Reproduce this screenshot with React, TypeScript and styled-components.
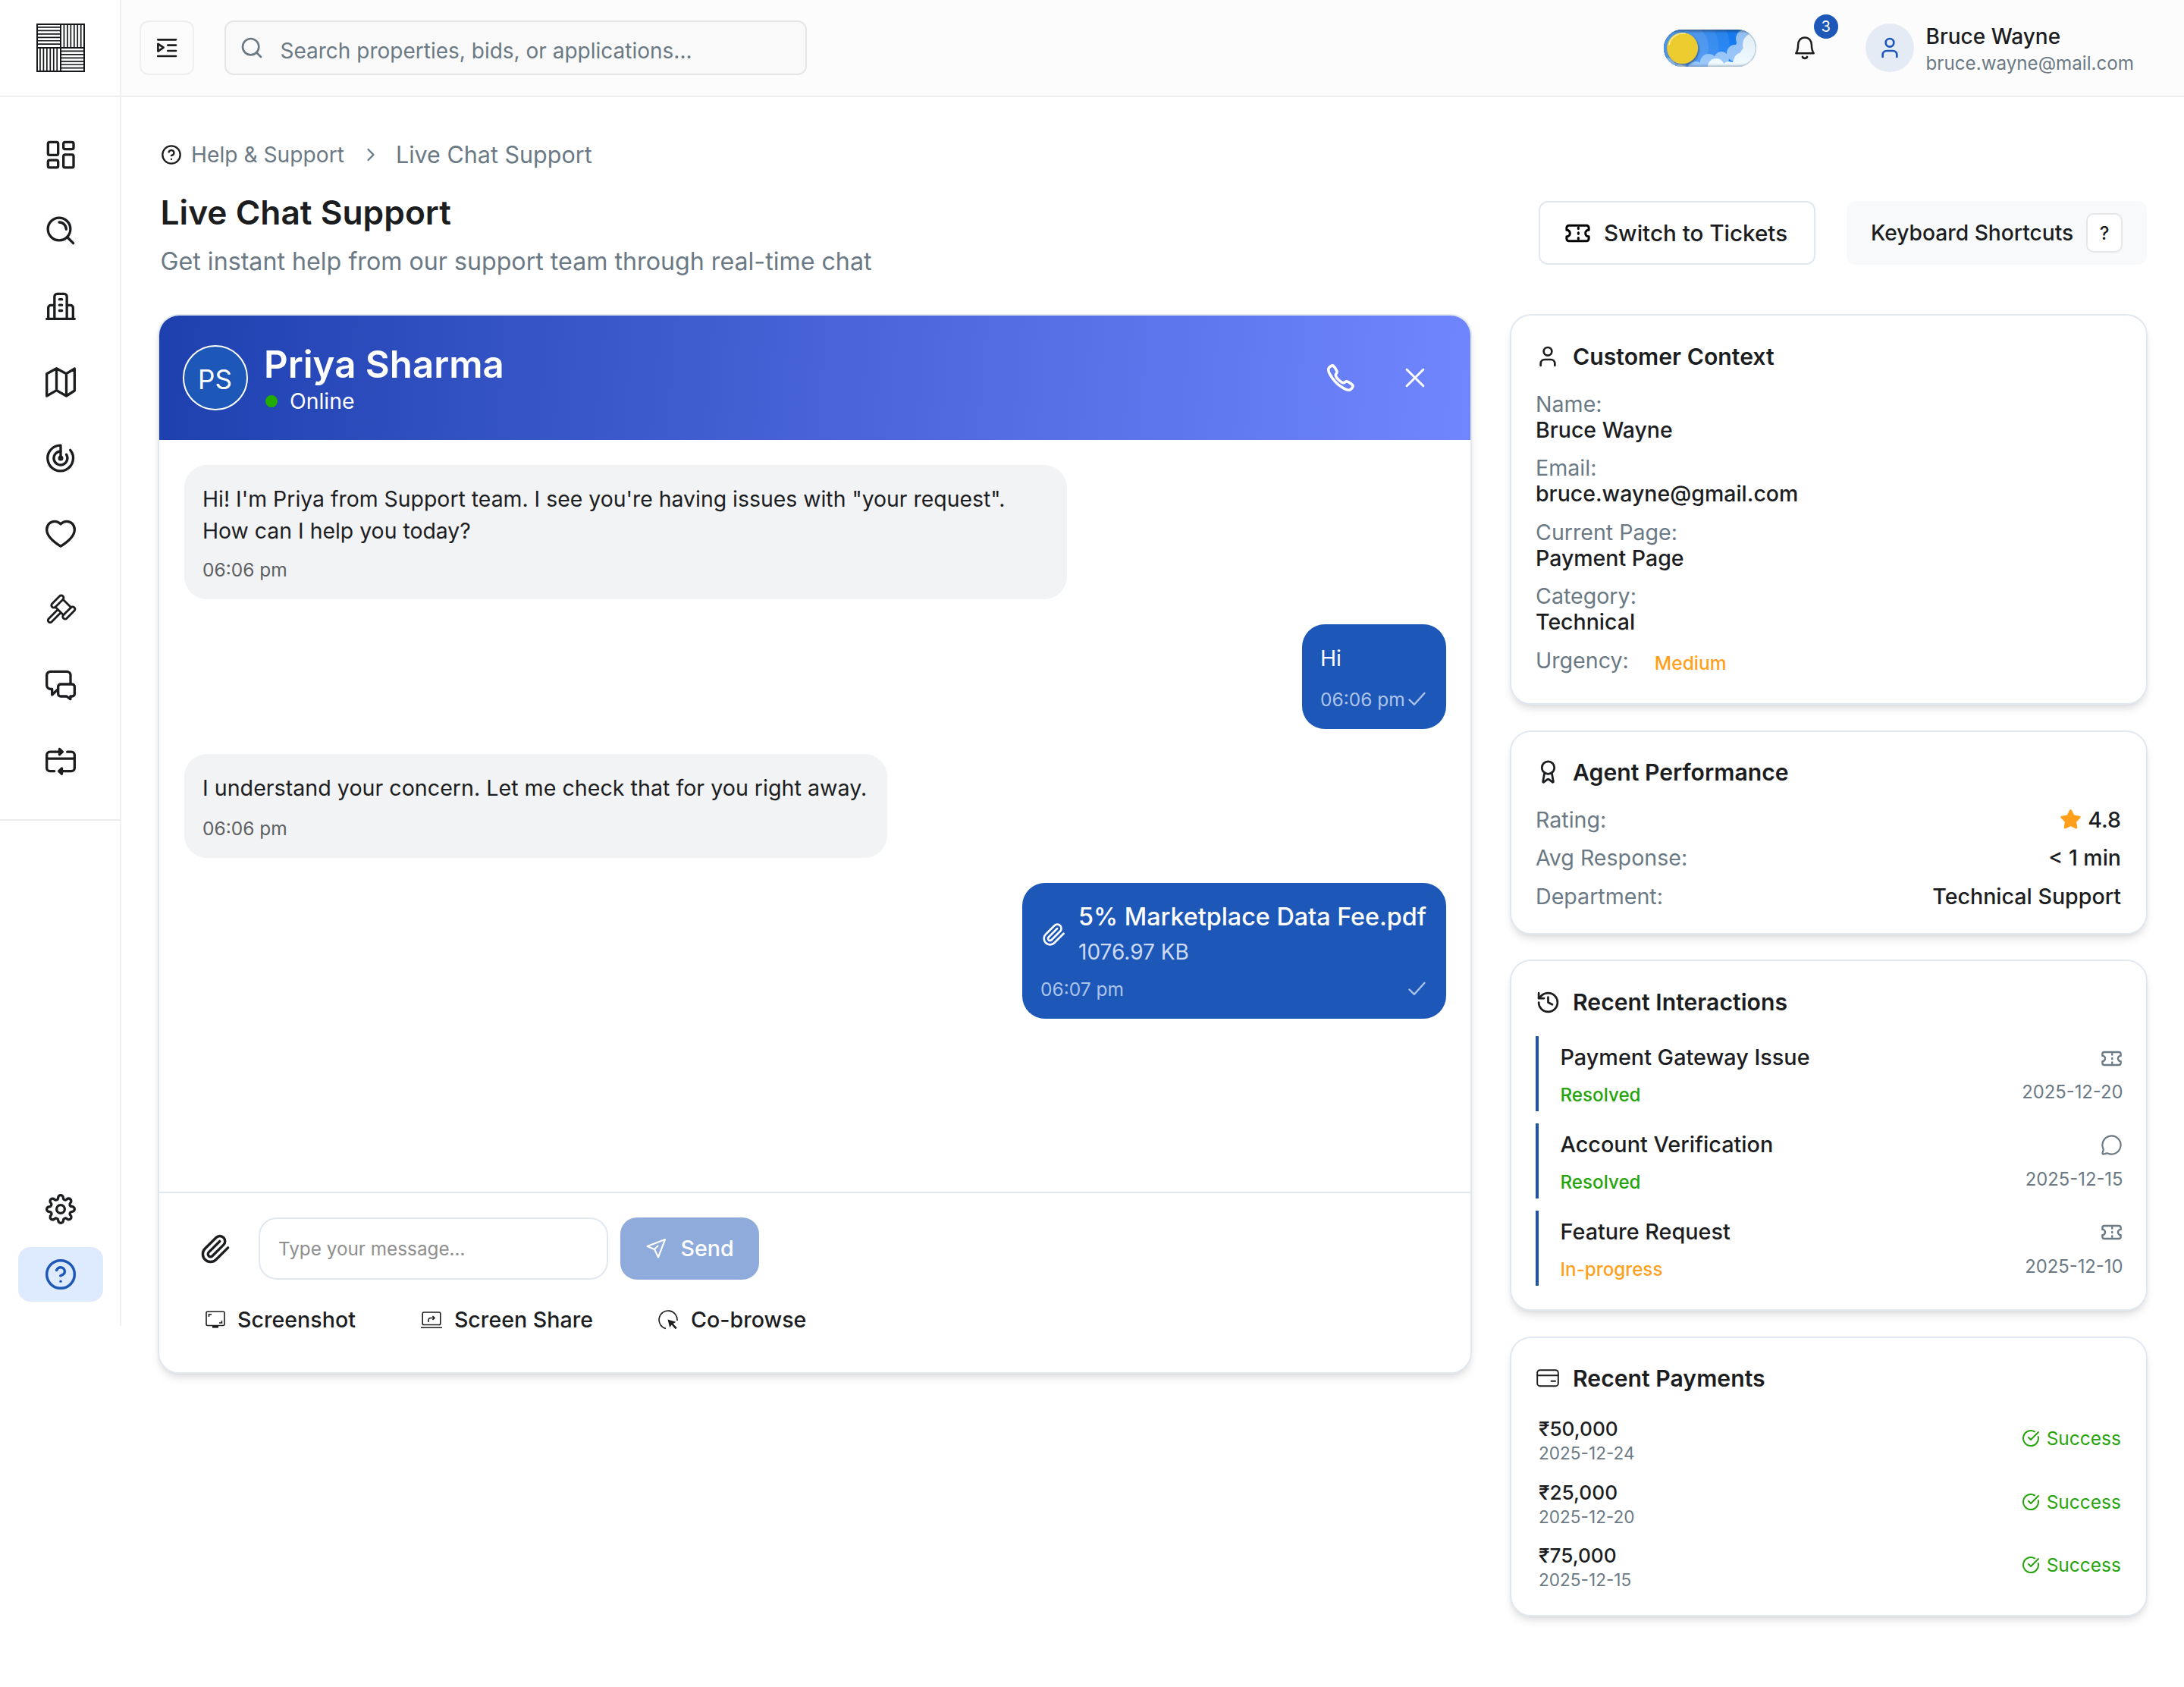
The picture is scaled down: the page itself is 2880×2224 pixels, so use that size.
import React from "react";
import styled, { createGlobalStyle, css } from "styled-components";
import {
  User,
  Award,
  History,
  MessageCircle,
  CircleCheckBig,
  Star,
  CircleHelp,
  Search,
  ChevronRight,
} from "lucide-react";
import { IoCallOutline } from "react-icons/io5";

const ink = "#1c1d1f";
const muted = "#6b7984";
const primary = "#1d58b8";
const green = "#25a40b";
const amber = "#ff9f1c";
const line = "#e2e8f0";

const GlobalStyle = createGlobalStyle`
  * { box-sizing: border-box; }
  body { margin: 0; background: #fff; }
  svg { display: block; flex: none; }
`;

type TypeProps = { $size: number; $lh: number; $weight?: number; $color?: string };
const type = css<TypeProps>`
  font-size: ${(p) => p.$size}px;
  line-height: ${(p) => p.$lh}px;
  font-weight: ${(p) => p.$weight ?? 400};
  color: ${(p) => p.$color ?? ink};
  white-space: nowrap;
`;

/* ---------- shell ---------- */

const Page = styled.div`
  display: flex;
  align-items: flex-start;
  width: 2880px;
  height: 2224px;
  overflow: hidden;
  font-family: Inter, "Liberation Sans", sans-serif;
  color: ${ink};
  background: #fff;
`;

const Sidebar = styled.aside`
  display: flex;
  flex-direction: column;
  width: 160px;
  height: 1748px;
  border-right: 2px solid #f0f0f1;
`;

const LogoCell = styled.div`
  display: flex;
  align-items: center;
  justify-content: center;
  height: 128px;
  padding-left: 2px;
  border-bottom: 2px solid #efeff0;
`;

const NavGroup = styled.nav<{ $main?: boolean }>`
  display: flex;
  flex-direction: column;
  align-items: center;
  padding-left: 2px;
  ${(p) =>
    p.$main
      ? css`
          gap: 28px;
          padding-top: 40px;
          height: 954px;
          border-bottom: 2px solid #e9ebec;
        `
      : css`
          margin-top: auto;
          gap: 14px;
          padding-bottom: 32px;
        `}
`;

const NavItem = styled.a<{ $active?: boolean }>`
  display: flex;
  align-items: center;
  justify-content: center;
  width: 112px;
  height: 72px;
  border-radius: 16px;
  color: ${(p) => (p.$active ? primary : ink)};
  background: ${(p) => (p.$active ? "#deeafe" : "transparent")};
`;

const Column = styled.div`
  flex: 1;
  min-width: 0;
`;

const TopBar = styled.header`
  display: flex;
  align-items: center;
  height: 128px;
  padding: 0 66px 0 24px;
  border-bottom: 2px solid #efeff0;
  background: #fcfcfc;
`;

const MenuButton = styled.button`
  display: flex;
  align-items: center;
  justify-content: center;
  width: 72px;
  height: 72px;
  padding: 0;
  border: 2px solid #efefef;
  border-radius: 12px;
  background: #fcfcfc;
  color: ${ink};
`;

const SearchBox = styled.div`
  display: flex;
  align-items: center;
  gap: 21.5px;
  width: 768px;
  height: 72px;
  margin-left: 40px;
  padding: 0 18px;
  border: 2px solid #e3e5e6;
  border-radius: 12px;
  background: #f9f9f9;
  color: ${muted};
`;

const SearchText = styled.span<TypeProps>`
  ${type}
  padding-top: 7px;
`;

const TopActions = styled.div`
  display: flex;
  align-items: center;
  margin-left: auto;
`;

const BellButton = styled.div`
  position: relative;
  margin: 0 64px 0 48px;
`;

const Badge = styled.span`
  position: absolute;
  left: 28px;
  top: -28px;
  display: flex;
  align-items: center;
  justify-content: center;
  width: 32px;
  height: 32px;
  border-radius: 50%;
  background: ${primary};
  color: #fff;
  font-size: 20px;
  line-height: 32px;
`;

const UserAvatar = styled.div`
  display: flex;
  align-items: center;
  justify-content: center;
  width: 64px;
  height: 64px;
  border-radius: 50%;
  background: #e5ebf5;
  color: ${primary};
`;

const UserText = styled.div`
  display: flex;
  flex-direction: column;
  gap: 1px;
  margin-left: 16px;
  padding-top: 4px;
`;

const Text = styled.span<TypeProps>`
  ${type}
`;

/* ---------- page heading ---------- */

const Main = styled.main`
  padding: 58px 48px 0;
`;

const Breadcrumb = styled.div`
  display: flex;
  align-items: center;
  height: 36px;
  padding-left: 4px;
  color: ${ink};
`;

const Crumb = styled.span<TypeProps & { $gap: number }>`
  ${type}
  margin-left: ${(p) => p.$gap}px;
`;

const PageHead = styled.div`
  display: flex;
  justify-content: space-between;
  margin-top: 30px;
  padding: 0 1px 0 3.5px;
`;

const HeadText = styled.div`
  display: flex;
  flex-direction: column;
  gap: 17px;
`;

const HeadActions = styled.div`
  display: flex;
  gap: 41px;
  height: 97px;
  padding-top: 13px;
`;

const TicketsButton = styled.button`
  display: flex;
  align-items: center;
  gap: 17px;
  height: 84px;
  width: 365px;
  padding: 0 0 0 32px;
  border: 2px solid ${line};
  border-radius: 12px;
  background: #fff;
  font-family: inherit;
`;

const Shortcuts = styled.div`
  display: flex;
  align-items: center;
  justify-content: space-between;
  width: 396px;
  height: 84px;
  padding: 0 32px;
  border-radius: 12px;
  background: #f8f9fb;
`;

const Key = styled.kbd`
  display: flex;
  align-items: center;
  justify-content: center;
  width: 48px;
  height: 52px;
  border: 2px solid #e6e7e9;
  border-radius: 10px;
  background: #fff;
  font-family: inherit;
  font-size: 24px;
  font-weight: 500;
`;

const Columns = styled.div`
  display: grid;
  grid-template-columns: 1733px 841px;
  justify-content: space-between;
  align-items: start;
  margin-top: 49px;
`;

/* ---------- chat ---------- */

const cardFrame = css`
  border: 2px solid ${line};
  border-radius: 28px;
  background: #fff;
  box-shadow: 0 8px 12px -2px rgba(16, 24, 40, 0.1), 0 4px 8px -4px rgba(16, 24, 40, 0.1);
`;

const ChatCard = styled.section`
  ${cardFrame}
  display: flex;
  flex-direction: column;
  height: 1397px;
  overflow: hidden;
`;

const ChatHeader = styled.div`
  display: flex;
  align-items: center;
  height: 164px;
  padding: 0 53px 0 31px;
  background: linear-gradient(95deg, #1e40af 0%, #7086ff 100%);
  color: #fff;
`;

const AgentAvatar = styled.div`
  display: flex;
  align-items: center;
  justify-content: center;
  width: 86px;
  height: 86px;
  border: 2px solid #fff;
  border-radius: 50%;
  background: ${primary};
  font-size: 35px;
  line-height: 40px;
  padding: 3px 1px 0 0;
`;

const AgentText = styled.div`
  display: flex;
  flex-direction: column;
  gap: 3px;
  margin-left: 21px;
`;

const Presence = styled.div`
  display: flex;
  align-items: center;
  gap: 16px;
  padding-left: 2px;

  &::before {
    content: "";
    width: 16px;
    height: 16px;
    border-radius: 50%;
    background: #22ab00;
  }
`;

const CallActions = styled.div`
  display: flex;
  gap: 58px;
  margin-left: auto;

  .call path {
    stroke-width: 46px;
  }
`;

const Messages = styled.div`
  display: flex;
  flex: 1;
  flex-direction: column;
  align-items: flex-start;
  gap: 33px;
  padding: 33px 32px 0 33px;
`;

const Bubble = styled.div<{ $own?: boolean; $width: number; $height: number }>`
  display: flex;
  flex-direction: column;
  justify-content: space-between;
  align-self: ${(p) => (p.$own ? "flex-end" : "flex-start")};
  width: ${(p) => p.$width}px;
  height: ${(p) => p.$height}px;
  padding: 24px 24px 23.5px;
  border-radius: 30px;
  color: ${(p) => (p.$own ? "#fff" : ink)};
  background: ${(p) => (p.$own ? primary : "#f2f3f5")};
`;

const BubbleText = styled.p<{ $size?: number }>`
  margin: 0;
  font-size: ${(p) => p.$size ?? 28.4}px;
  line-height: 42px;
  white-space: nowrap;
`;

const BubbleMeta = styled.div<{ $own?: boolean }>`
  display: flex;
  align-items: center;
  justify-content: space-between;
  padding-right: 3.5px;
  font-size: 24.5px;
  line-height: 32px;
  white-space: nowrap;
  color: ${(p) => (p.$own ? "#adc4e8" : "#5d6063")};
`;

const Attachment = styled.div`
  display: flex;
  align-items: center;
  gap: 16.5px;
  padding-left: 1.5px;
`;

const AttachmentText = styled.div`
  display: flex;
  flex-direction: column;
  gap: 5px;
`;

const Composer = styled.div`
  height: 238px;
  padding: 32px 0 0 54px;
  border-top: 2px solid ${line};
`;

const ComposerRow = styled.div`
  display: flex;
  align-items: center;
`;

const MessageInput = styled.div`
  display: flex;
  align-items: center;
  width: 461px;
  height: 82px;
  margin: 0 16px 0 36px;
  padding-left: 24px;
  border: 2px solid ${line};
  border-radius: 24px;
  background: #fff;
`;

const SendButton = styled.button`
  display: flex;
  align-items: center;
  gap: 18.5px;
  width: 183px;
  height: 82px;
  padding: 0 0 1px 34px;
  border: 0;
  border-radius: 22px;
  background: #8eabdb;
  font-family: inherit;
`;

const Tools = styled.div`
  display: flex;
  align-items: center;
  gap: 86px;
  margin-top: 35px;
  padding-left: 7px;
`;

const Tool = styled.div`
  display: flex;
  align-items: center;
  gap: 16px;
`;

/* ---------- side cards ---------- */

const SideColumn = styled.div`
  display: flex;
  flex-direction: column;
  gap: 33.6px;
`;

const SideCard = styled.section<{ $height: number; $top?: number }>`
  ${cardFrame}
  display: flex;
  flex-direction: column;
  height: ${(p) => p.$height}px;
  padding: ${(p) => p.$top ?? 34}px 33px 0 32px;
`;

const CardHead = styled.h2<{ $gap: number }>`
  display: flex;
  align-items: center;
  gap: 17px;
  height: 40px;
  margin: 0 0 ${(p) => p.$gap}px;
  font-size: 30.2px;
  line-height: 40px;
  font-weight: 600;
`;

const HeadIcon = styled.span`
  display: flex;
  justify-content: center;
  width: 32px;
`;

const Rows = styled.div<{ $gap: number }>`
  display: flex;
  flex-direction: column;
  gap: ${(p) => p.$gap}px;
`;

const Field = styled.div`
  display: flex;
  flex-direction: column;
`;

const InlineField = styled.div`
  display: flex;
  align-items: flex-end;
  gap: 34px;
`;

const UrgencyTag = styled.span<TypeProps>`
  ${type}
  margin-bottom: -3px;
`;

const StatRow = styled.div`
  display: flex;
  align-items: center;
  justify-content: space-between;
`;

const StatValue = styled.div`
  display: flex;
  align-items: center;
  gap: 8px;
`;

const Interaction = styled.div`
  display: flex;
  justify-content: space-between;
  height: 99px;
  margin-right: -2.5px;
  padding: 8px 0 0 28.5px;
  border-left: 4px solid #1f55a8;
`;

const InteractionText = styled.div<{ $end?: boolean }>`
  display: flex;
  flex-direction: column;
  align-items: ${(p) => (p.$end ? "flex-end" : "flex-start")};
  gap: ${(p) => (p.$end ? 9 : 15)}px;
  color: ${muted};
`;

const IconLine = styled.span`
  display: flex;
  align-items: center;
  height: 42px;
  padding-right: 1px;
`;

const Payment = styled.div`
  display: flex;
  justify-content: space-between;
  height: 64px;
  padding-left: 4px;
`;

const PaymentText = styled.div`
  display: flex;
  flex-direction: column;
  gap: 1px;
`;

const PaymentStatus = styled.div`
  display: flex;
  align-items: center;
  gap: 9px;
  height: 58px;
  color: ${green};
`;

/* ---------- icons ---------- */

type IconProps = { size?: number; sw?: number; children?: React.ReactNode };
const Glyph = ({ size = 40, sw = 2, children }: IconProps) => (
  <svg
    width={size}
    height={size}
    viewBox="0 0 24 24"
    fill="none"
    stroke="currentColor"
    strokeWidth={sw}
    strokeLinecap="round"
    strokeLinejoin="round"
    overflow="visible"
  >
    {children}
  </svg>
);

const steps = [4.45, 8.9, 13.35, 17.8, 22.25, 26.7];
const Logo = () => (
  <svg width="64" height="64" viewBox="0 0 64 64" fill="none" stroke="#17181a" strokeWidth="1.7">
    <rect x="1" y="1" width="62" height="62" strokeWidth="2" />
    <path d="M32 0V64M0 32H64" strokeWidth="2" />
    {steps.map((s) => (
      <path key={s} d={`M0 ${s + 0.5}H32M${32 + s} 0V32M${s + 0.5} 32V64M32 ${32 + s}H64`} />
    ))}
  </svg>
);

const GridIcon = () => (
  <Glyph>
    <rect x="2" y="2" width="8" height="10.2" rx="1.3" />
    <rect x="14.2" y="2" width="8" height="5.6" rx="1.3" />
    <rect x="2" y="16.3" width="8" height="5.8" rx="1.3" />
    <rect x="14.2" y="11.9" width="8" height="10.2" rx="1.3" />
  </Glyph>
);

const ExploreIcon = () => (
  <Glyph>
    <circle cx="10.8" cy="10.8" r="8.9" />
    <path d="M17.4 17.4L22 22M10.8 5.4a5.6 5.6 0 0 1 5.6 5.6" />
  </Glyph>
);

const BuildingIcon = () => (
  <Glyph>
    <path d="M7.1 21.8V4.2A2.2 2.2 0 0 1 9.3 2h5.4a2.2 2.2 0 0 1 2.2 2.2v17.6" />
    <path d="M7 11H4.2a2 2 0 0 0-2 2v8.8M17 11h2.8a2 2 0 0 1 2 2v8.8M1 21.8h22" />
    <path d="M11 6.4h2M11 10.9h2M11 15.3h2" />
  </Glyph>
);

const MapIcon = () => (
  <Glyph>
    <path d="M1 5.2v17.6l7.7-4.4 7.8 4.4 6.5-4.2V1.2l-6.5 4-7.8-4.2zM8.7 1v17.4M16.5 5.2v17.6" />
  </Glyph>
);

const TargetIcon = () => (
  <Glyph>
    <path d="M12 12V1.9A10.1 10.1 0 1 0 19.6 5.6" />
    <path d="M12 6.6a5.4 5.4 0 1 0 4.5 2.5" />
    <circle cx="12" cy="12" r="1.1" />
  </Glyph>
);

const HeartIcon = () => (
  <Glyph>
    <path d="M12 4.1C10.7 2.8 9.1 2 7.2 2 3.7 2 1 4.8 1 8.5c0 5.6 5.6 9.8 11 13.2 5.4-3.4 11-7.6 11-13.2C23 4.8 20.3 2 16.8 2c-1.9 0-3.5.8-4.8 2.1Z" />
  </Glyph>
);

const GavelIcon = () => (
  <Glyph sw={1.7}>
    <g transform="translate(14 9.9) rotate(-45)">
      <rect x="-6" y="-8.2" width="12" height="3.7" rx="1.7" />
      <rect x="-6" y="4.5" width="12" height="3.7" rx="1.7" />
      <path d="M-4.3 -4.5V4.5M4.3 -4.5V4.5M-4.3 -1.7H-14.6a1.7 1.7 0 0 0 0 3.4H-4.3" />
    </g>
  </Glyph>
);

const ChatsIcon = () => (
  <Glyph>
    <path d="M19.8 10V3.8a3 3 0 0 0-3-3H4a3 3 0 0 0-3 3v7.8a3 3 0 0 0 3 3h1.2v4.6l4.4-4.2" />
    <path d="M12 10.8h9a2 2 0 0 1 2 2v5.6a2 2 0 0 1-2 2h-1.3v2.2l-3-2.2H12a2 2 0 0 1-2-2v-5.6a2 2 0 0 1 2-2Z" />
  </Glyph>
);

const CardSwapIcon = () => (
  <Glyph>
    <path d="M7 19.6H3.5A2.5 2.5 0 0 1 1 17.1V6.8a2.5 2.5 0 0 1 2.5-2.5H13M17.2 4.3h3.3A2.5 2.5 0 0 1 23 6.8v10.3a2.5 2.5 0 0 1-2.5 2.5H11M1 9.7h22" />
    <path d="M11.1 2.1v4.4l2.3-2.2zM12.9 17.4v4.4l-2.3-2.2z" fill="currentColor" />
  </Glyph>
);

const GearIcon = () => (
  <Glyph>
    <circle cx="12" cy="12" r="3.2" />
    <path d="M19.4 15a1.65 1.65 0 0 0 .33 1.82l.06.06a2 2 0 0 1 0 2.83 2 2 0 0 1-2.83 0l-.06-.06a1.65 1.65 0 0 0-1.82-.33 1.65 1.65 0 0 0-1 1.51V21a2 2 0 0 1-2 2 2 2 0 0 1-2-2v-.09A1.65 1.65 0 0 0 9 19.4a1.65 1.65 0 0 0-1.82.33l-.06.06a2 2 0 0 1-2.83 0 2 2 0 0 1 0-2.83l.06-.06a1.65 1.65 0 0 0 .33-1.82 1.65 1.65 0 0 0-1.51-1H3a2 2 0 0 1-2-2 2 2 0 0 1 2-2h.09A1.65 1.65 0 0 0 4.6 9a1.65 1.65 0 0 0-.33-1.82l-.06-.06a2 2 0 0 1 0-2.83 2 2 0 0 1 2.83 0l.06.06a1.65 1.65 0 0 0 1.82.33H9a1.65 1.65 0 0 0 1-1.51V3a2 2 0 0 1 2-2 2 2 0 0 1 2 2v.09a1.65 1.65 0 0 0 1 1.51 1.65 1.65 0 0 0 1.82-.33l.06-.06a2 2 0 0 1 2.83 0 2 2 0 0 1 0 2.83l-.06.06a1.65 1.65 0 0 0-.33 1.82V9a1.65 1.65 0 0 0 1.51 1H21a2 2 0 0 1 2 2 2 2 0 0 1-2 2h-.09a1.65 1.65 0 0 0-1.51 1z" />
  </Glyph>
);

const MenuIcon = () => (
  <svg width="32" height="32" viewBox="0 0 32 32" fill="none" stroke="currentColor" strokeWidth="2.7" strokeLinecap="round" strokeLinejoin="round">
    <path d="M4.2 5.3H28M17.3 12.6H28M17.3 20H28M4.2 27H28M4.4 10.8v9.8l7.2-4.9z" />
  </svg>
);

const BellIcon = () => (
  <svg width="32" height="32" viewBox="0 0 32 32" fill="none" stroke={ink} strokeWidth="2.5" strokeLinecap="round" strokeLinejoin="round">
    <path d="M4.3 23.3C6.3 20.3 7.1 17 7.1 12.2 7.1 6.4 10.9 2.4 16 2.4s8.9 4 8.9 9.8c0 4.8.8 8.1 2.8 11.1Z" />
    <path d="M13 28c.5 1.3 1.7 1.8 3 1.8s2.5-.5 3-1.8" strokeWidth="2.8" />
  </svg>
);

const TicketIcon = ({ size, sw }: IconProps) => (
  <Glyph size={size} sw={sw}>
    <path d="M2 9a3 3 0 0 1 0 6v2a2 2 0 0 0 2 2h16a2 2 0 0 0 2-2v-2a3 3 0 0 1 0-6V7a2 2 0 0 0-2-2H4a2 2 0 0 0-2 2Z" />
    <path d="M12.6 6.8v1M12.6 11.5v1M12.6 16.2v1" />
  </Glyph>
);

const ClipIcon = ({ size, sw }: IconProps) => (
  <Glyph size={size} sw={sw}>
    <path d="m21.44 11.05-9.19 9.19a6 6 0 0 1-8.49-8.49l8.57-8.57A4 4 0 1 1 18 8.84l-8.59 8.57a2 2 0 0 1-2.83-2.83l8.49-8.48" />
  </Glyph>
);

const CloseIcon = () => (
  <svg width="40" height="40" viewBox="0 0 40 40" fill="none" stroke="#fff" strokeWidth="3" strokeLinecap="round">
    <path d="M9.2 9.2L30.8 30.8M30.8 9.2L9.2 30.8" />
  </svg>
);

const TickIcon = () => (
  <svg width="23" height="19" viewBox="0 0 23 19" fill="none" stroke="currentColor" strokeWidth="2.3" strokeLinecap="round" strokeLinejoin="round">
    <path d="M1.5 10.5L8 16.8L21.5 1.8" />
  </svg>
);

const SendIcon = () => (
  <svg width="27" height="27" viewBox="0 0 27 27" fill="none" stroke="#fff" strokeWidth="2.1" strokeLinejoin="round" strokeLinecap="round">
    <path d="M25 2L1.5 11l9.5 4L16 25.5ZM11 15l4.5-4.5" />
  </svg>
);

const ScreenshotIcon = () => (
  <svg width="26" height="24" viewBox="0 0 26 24" fill="none" stroke={ink} strokeWidth="1.6">
    <rect x="1" y="1" width="24" height="18.5" rx="2" />
    <path d="M4.5 8V4.7H8M21.5 13v3H18" />
    <path d="M9 20h8v2.600H9z" fill={ink} stroke="none" />
  </svg>
);

const ScreenShareIcon = () => (
  <svg width="28" height="23" viewBox="0 0 28 23" fill="none" stroke={ink} strokeWidth="1.6">
    <rect x="2.2" y="1" width="23.6" height="16.5" rx="1.8" />
    <path d="M0 21.300H28M10 14V11.5a3 3 0 0 1 3-3H17.500M15.500 6l2.500 2.500-2.500 2.500" />
  </svg>
);

const CoBrowseIcon = () => (
  <svg width="27" height="27" viewBox="0 0 27 27" fill="none" stroke={ink} strokeWidth="1.6">
    <path d="M10 24.6A12 12 0 1 1 25 14" />
    <path d="M12.5 12.5l2.700 10.500 2.500-3.400 5 5.600 2-1.800-5-5.500 3.700-2.200z" fill={ink} stroke="none" />
  </svg>
);

const WalletIcon = () => (
  <svg width="30" height="24" viewBox="0 0 30 24" fill="none" stroke={ink} strokeWidth="1.900" strokeLinecap="round">
    <rect x="1.200" y="1.200" width="27.600" height="21" rx="3.500" />
    <path d="M1.200 8.300H28.800M19.500 15.700H25" />
  </svg>
);

const discs = (list: number[][], fill: string) =>
  list.map(([cx, cy, r]) => <circle key={`${cx}-${cy}`} cx={cx} cy={cy} r={r} fill={fill} />);

const ThemeToggle = () => (
  <svg width="122" height="49" viewBox="0 0 122 49">
    <defs>
      <clipPath id="pill">
        <rect width="122" height="49" rx="24.500" />
      </clipPath>
      <linearGradient id="shade" x1="0" y1="0" x2="0" y2="1">
        <stop offset="0" stopColor="#0c2340" stopOpacity="0.500" />
        <stop offset="0.100" stopColor="#0c2340" stopOpacity="0.060" />
        <stop offset="0.900" stopColor="#0c2340" stopOpacity="0" />
        <stop offset="1" stopColor="#0c2340" stopOpacity="0.160" />
      </linearGradient>
      <filter id="soft" x="-20%" y="-20%" width="140%" height="150%">
        <feDropShadow dx="1" dy="2" stdDeviation="1.500" floodColor="#0b2b55" floodOpacity="0.600" />
      </filter>
    </defs>
    <g clipPath="url(#pill)">
      <rect width="122" height="49" fill="#177ff8" />
      <circle cx="25" cy="24" r="62" fill="#2b8af7" />
      <circle cx="25" cy="24" r="47.500" fill="#3c92f6" />
      <circle cx="25" cy="24" r="34" fill="#529df6" />
      {discs([[5, 47, 10], [20, 50, 10], [42, 53, 11], [59, 43, 11], [76, 39, 10], [94, 31, 11], [104, 22, 9], [107, 12, 12], [114, 2, 10]], "#9bc8fb")}
      {discs([[22, 55, 9], [69, 49, 11], [86, 52, 10], [104, 42, 12], [120, 20, 16], [116, 36, 16], [100, 50, 12]], "#effaff")}
      <rect width="122" height="49" fill="url(#shade)" />
      <rect x="0.500" y="0.500" width="121" height="48" rx="24" fill="none" stroke="#5b7288" strokeOpacity="0.250" strokeWidth="2" />
    </g>
    <circle cx="24.600" cy="24.500" r="20.500" fill="#ebcb2d" filter="url(#soft)" />
    <path d="M7 20A18.500 18.500 0 0 1 28 5.300" stroke="#fbee9c" strokeWidth="1.500" fill="none" strokeLinecap="round" />
  </svg>
);

/* ---------- data ---------- */

const mainNav = [GridIcon, ExploreIcon, BuildingIcon, MapIcon, TargetIcon, HeartIcon, GavelIcon, ChatsIcon, CardSwapIcon];

const context = [
  ["Name:", "Bruce Wayne"],
  ["Email:", "bruce.wayne@gmail.com"],
  ["Current Page:", "Payment Page"],
  ["Category:", "Technical"],
];

const interactions = [
  { title: "Payment Gateway Issue", status: "Resolved", date: "2025-12-20", kind: "ticket" },
  { title: "Account Verification", status: "Resolved", date: "2025-12-15", kind: "chat" },
  { title: "Feature Request", status: "In-progress", date: "2025-12-10", kind: "ticket" },
];

const payments = [
  ["₹50,000", "2025-12-24"],
  ["₹25,000", "2025-12-20"],
  ["₹75,000", "2025-12-15"],
];

/* ---------- sections ---------- */

const Chat = () => (
  <ChatCard>
    <ChatHeader>
      <AgentAvatar>PS</AgentAvatar>
      <AgentText>
        <Text $size={49.2} $lh={58} $weight={600} $color="#fff">Priya Sharma</Text>
        <Presence>
          <Text $size={28.4} $lh={34} $color="#fff">Online</Text>
        </Presence>
      </AgentText>
      <CallActions>
        <IoCallOutline size={40} className="call" />
        <CloseIcon />
      </CallActions>
    </ChatHeader>
    <Messages>
      <Bubble $width={1164} $height={177}>
        <BubbleText>
          Hi! I'm Priya from Support team. I see you're having issues with "your request".
          <br />
          How can I help you today?
        </BubbleText>
        <BubbleMeta>06:06 pm</BubbleMeta>
      </Bubble>
      <Bubble $own $width={190} $height={138}>
        <BubbleText>Hi</BubbleText>
        <BubbleMeta $own>
          06:06 pm
          <TickIcon />
        </BubbleMeta>
      </Bubble>
      <Bubble $width={927} $height={137}>
        <BubbleText $size={28.65}>I understand your concern. Let me check that for you right away.</BubbleText>
        <BubbleMeta>06:06 pm</BubbleMeta>
      </Bubble>
      <Bubble $own $width={559} $height={179}>
        <Attachment>
          <ClipIcon size={32} sw={2} />
          <AttachmentText>
            <Text $size={32.3} $lh={42} $weight={500} $color="#fff">5% Marketplace Data Fee.pdf</Text>
            <Text $size={28} $lh={40} $color="#cddbf1">1076.97 KB</Text>
          </AttachmentText>
        </Attachment>
        <BubbleMeta $own>
          06:07 pm
          <TickIcon />
        </BubbleMeta>
      </Bubble>
    </Messages>
    <Composer>
      <ComposerRow>
        <ClipIcon size={41} sw={2} />
        <MessageInput>
          <Text $size={24.3} $lh={32} $color="#8f8f8f">Type your message...</Text>
        </MessageInput>
        <SendButton>
          <SendIcon />
          <Text $size={28.6} $lh={36} $weight={500} $color="#fff">Send</Text>
        </SendButton>
      </ComposerRow>
      <Tools>
        <Tool>
          <ScreenshotIcon />
          <Text $size={28.6} $lh={36} $weight={500}>Screenshot</Text>
        </Tool>
        <Tool>
          <ScreenShareIcon />
          <Text $size={28.6} $lh={36} $weight={500}>Screen Share</Text>
        </Tool>
        <Tool>
          <CoBrowseIcon />
          <Text $size={28.6} $lh={36} $weight={500}>Co-browse</Text>
        </Tool>
      </Tools>
    </Composer>
  </ChatCard>
);

const CustomerContext = () => (
  <SideCard $height={515}>
    <CardHead $gap={26}>
      <HeadIcon><User size={32} strokeWidth={2} /></HeadIcon>
      Customer Context
    </CardHead>
    <Rows $gap={16.4}>
      {context.map(([label, value]) => (
        <Field key={label}>
          <Text $size={28.6} $lh={34} $color={muted}>{label}</Text>
          <Text $size={28.5} $lh={34} $weight={500}>{value}</Text>
        </Field>
      ))}
      <InlineField>
        <Text $size={28.6} $lh={34} $color={muted}>Urgency:</Text>
        <UrgencyTag $size={24.6} $lh={34} $weight={500} $color={amber}>Medium</UrgencyTag>
      </InlineField>
    </Rows>
  </SideCard>
);

const AgentPerformance = () => (
  <SideCard $height={269} $top={33}>
    <CardHead $gap={26}>
      <HeadIcon><Award size={33} strokeWidth={2} /></HeadIcon>
      Agent Performance
    </CardHead>
    <Rows $gap={16.6}>
      <StatRow>
        <Text $size={28.6} $lh={34} $color={muted}>Rating:</Text>
        <StatValue>
          <Star size={29} fill={amber} stroke={amber} strokeWidth={1.8} />
          <Text $size={28.5} $lh={34} $weight={500}>4.8</Text>
        </StatValue>
      </StatRow>
      <StatRow>
        <Text $size={28.6} $lh={34} $color={muted}>Avg Response:</Text>
        <Text $size={28.5} $lh={34} $weight={500}>&lt; 1 min</Text>
      </StatRow>
      <StatRow>
        <Text $size={28.6} $lh={34} $color={muted}>Department:</Text>
        <Text $size={28.6} $lh={34} $weight={500}>Technical Support</Text>
      </StatRow>
    </Rows>
  </SideCard>
);

const RecentInteractions = () => (
  <SideCard $height={463}>
    <CardHead $gap={25}>
      <HeadIcon><History size={33} strokeWidth={2} /></HeadIcon>
      Recent Interactions
    </CardHead>
    <Rows $gap={15.8}>
      {interactions.map((it) => (
        <Interaction key={it.title}>
          <InteractionText>
            <Text $size={28.8} $lh={40} $weight={500}>{it.title}</Text>
            <Text $size={24.2} $lh={30} $weight={500} $color={it.status === "Resolved" ? green : amber}>
              {it.status}
            </Text>
          </InteractionText>
          <InteractionText $end>
            <IconLine>
              {it.kind === "ticket" ? <TicketIcon size={29} sw={2} /> : <MessageCircle size={29} strokeWidth={1.8} />}
            </IconLine>
            <Text $size={23.8} $lh={30} $color={muted}>{it.date}</Text>
          </InteractionText>
        </Interaction>
      ))}
    </Rows>
  </SideCard>
);

const RecentPayments = () => (
  <SideCard $height={369} $top={33}>
    <CardHead $gap={30}>
      <HeadIcon><WalletIcon /></HeadIcon>
      Recent Payments
    </CardHead>
    <Rows $gap={19.8}>
      {payments.map(([amount, date]) => (
        <Payment key={amount}>
          <PaymentText>
            <Text $size={26.2} $lh={34} $weight={500}>{amount}</Text>
            <Text $size={22.6} $lh={28} $color={muted}>{date}</Text>
          </PaymentText>
          <PaymentStatus>
            <CircleCheckBig size={24} strokeWidth={2} />
            <Text $size={24.5} $lh={34} $color={green}>Success</Text>
          </PaymentStatus>
        </Payment>
      ))}
    </Rows>
  </SideCard>
);

export default function App() {
  return (
    <Page>
      <GlobalStyle />
      <Sidebar>
        <LogoCell>
          <Logo />
        </LogoCell>
        <NavGroup $main>
          {mainNav.map((Icon, i) => (
            <NavItem key={i}>
              <Icon />
            </NavItem>
          ))}
        </NavGroup>
        <NavGroup>
          <NavItem>
            <GearIcon />
          </NavItem>
          <NavItem $active>
            <CircleHelp size={44} strokeWidth={1.9} />
          </NavItem>
        </NavGroup>
      </Sidebar>
      <Column>
        <TopBar>
          <MenuButton>
            <MenuIcon />
          </MenuButton>
          <SearchBox>
            <Search size={32} strokeWidth={2} />
            <SearchText $size={28} $lh={34} $color={muted}>Search properties, bids, or applications...</SearchText>
          </SearchBox>
          <TopActions>
            <ThemeToggle />
            <BellButton>
              <BellIcon />
              <Badge>3</Badge>
            </BellButton>
            <UserAvatar>
              <User size={32} strokeWidth={2} />
            </UserAvatar>
            <UserText>
              <Text $size={28} $lh={36} $weight={500}>Bruce Wayne</Text>
              <Text $size={24.2} $lh={34} $color={muted}>bruce.wayne@mail.com</Text>
            </UserText>
          </TopActions>
        </TopBar>
        <Main>
          <Breadcrumb>
            <CircleHelp size={28} strokeWidth={2} />
            <Crumb $size={28.2} $lh={36} $color={muted} $gap={12}>Help &amp; Support</Crumb>
            <Crumb $size={28} $lh={28} $color={muted} $gap={21}>
              <ChevronRight size={28} strokeWidth={2} />
            </Crumb>
            <Crumb $size={30.5} $lh={38} $color={muted} $gap={19}>Live Chat Support</Crumb>
          </Breadcrumb>
          <PageHead>
            <HeadText>
              <Text $size={44.3} $lh={56} $weight={600}>Live Chat Support</Text>
              <Text $size={32.2} $lh={40} $color={muted}>
                Get instant help from our support team through real-time chat
              </Text>
            </HeadText>
            <HeadActions>
              <TicketsButton>
                <TicketIcon size={35} sw={2.1} />
                <Text $size={29.6} $lh={36} $weight={500}>Switch to Tickets</Text>
              </TicketsButton>
              <Shortcuts>
                <Text $size={28.2} $lh={36} $weight={500}>Keyboard Shortcuts</Text>
                <Key>?</Key>
              </Shortcuts>
            </HeadActions>
          </PageHead>
          <Columns>
            <Chat />
            <SideColumn>
              <CustomerContext />
              <AgentPerformance />
              <RecentInteractions />
              <RecentPayments />
            </SideColumn>
          </Columns>
        </Main>
      </Column>
    </Page>
  );
}
